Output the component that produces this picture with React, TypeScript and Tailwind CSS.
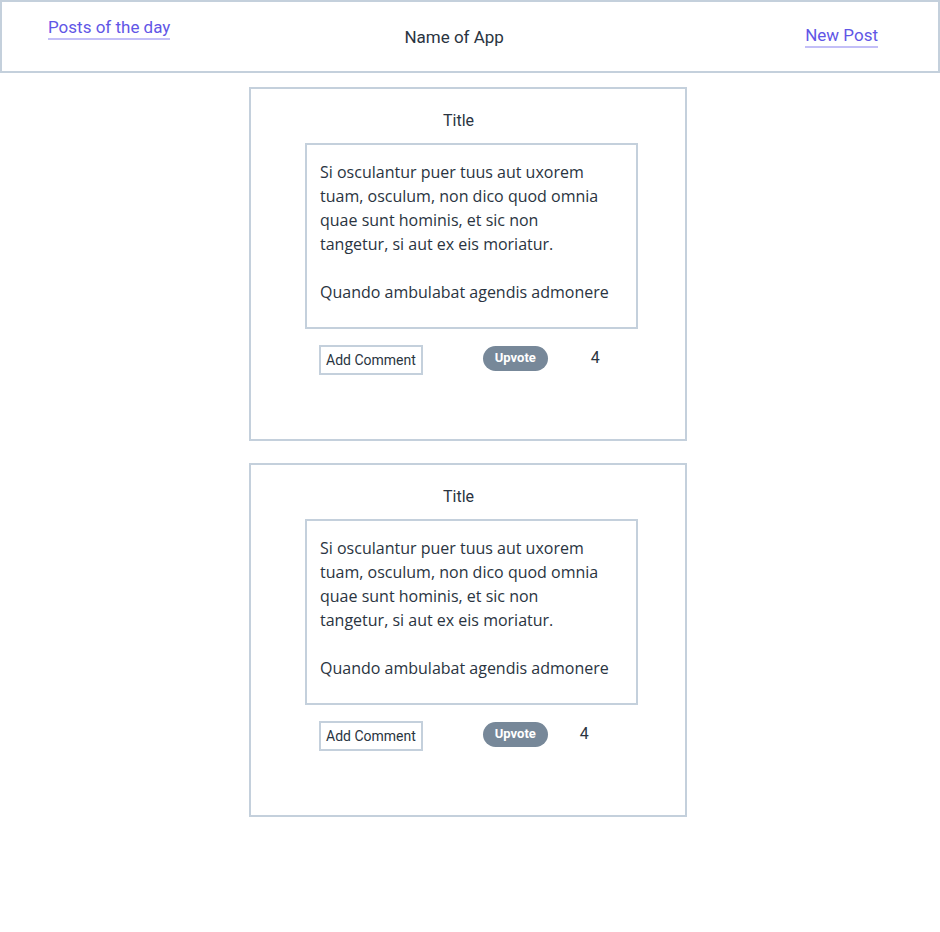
import React from "react";

const font = { fontFamily: "Roboto, 'Noto Sans', sans-serif" };
const bodyFont = { fontFamily: "'Open Sans', Roboto, sans-serif" };

const body = [
  "Si osculantur puer tuus aut uxorem tuam, osculum, non dico quod omnia quae sunt hominis, et sic non tangetur, si aut ex eis moriatur.",
  "Quando ambulabat agendis admonere",
];

function PostCard({ votes, countClass }: { votes: number; countClass: string }) {
  return (
    <div className="w-[438px] h-[354px] border-2 border-[#c4d0dc] flex flex-col items-start pt-[20px]">
      <h2 className="w-full pr-[19px] text-center text-[16px] leading-[24px] text-[#2a3441]">Title</h2>
      <div
        className="ml-[54px] mt-[10px] w-[333px] border-2 border-[#c4d0dc] pl-[13px] pr-[30px] pt-[15px] pb-[23px] text-[16px] leading-[24px] text-[#2a3441]"
        style={bodyFont}
      >
        <p>{body[0]}</p>
        <p className="mt-[24px] whitespace-nowrap">{body[1]}</p>
      </div>
      <div className="ml-[54px] w-[333px] flex items-center mt-[16px] pl-[14px]">
        <button className="h-[30px] px-[5px] border-2 border-[#c4d0dc] text-[14px] text-[#2a3441]">Add Comment</button>
        <button className="ml-[60px] h-[25px] px-[12px] rounded-full bg-[#778899] text-white text-[13px] font-bold -mt-[4px]">Upvote</button>
        <span className={`${countClass} text-[16px] text-[#2a3441] -mt-[4px]`}>{votes}</span>
      </div>
    </div>
  );
}

export default function App() {
  const posts = [
    { id: 1, votes: 4, countClass: "ml-[43px]" },
    { id: 2, votes: 4, countClass: "ml-[32px]" },
  ];

  return (
    <div className="min-h-[932px] bg-white" style={font}>
      <header className="h-[73px] border-2 border-[#c4d0dc] flex items-start pl-[46px] pr-[60px]">
        <a href="#" className="mt-[14px] text-[17px] leading-[22px] text-[#6156e6] border-b-2 border-[#c3bff7]">
          Posts of the day
        </a>
        <span className="ml-[234px] mt-[23px] text-[17px] leading-[24px] text-[#2a3441]">Name of App</span>
        <a href="#" className="ml-auto mt-[22px] text-[17px] leading-[22px] text-[#6156e6] border-b-2 border-[#c3bff7]">
          New Post
        </a>
      </header>

      <main className="flex flex-col items-center gap-[22px] pt-[14px] pr-[4px]">
        {posts.map((p) => (
          <PostCard key={p.id} votes={p.votes} countClass={p.countClass} />
        ))}
      </main>
    </div>
  );
}
